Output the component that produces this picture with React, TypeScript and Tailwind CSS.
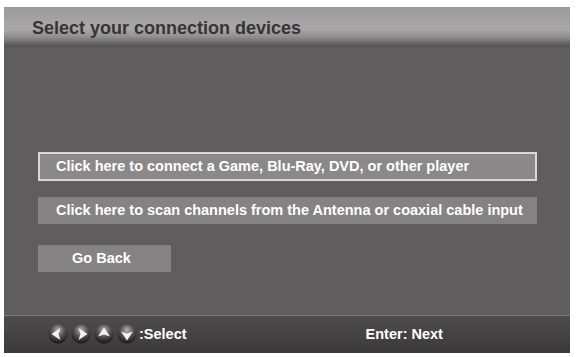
const ArrowBall = ({ dir }: { dir: "left" | "right" | "up" | "down" }) => {
  const paths: Record<string, string> = {
    left: "M3.5 10 L12.5 4 L10.5 10 L12.5 16 Z",
    right: "M16.5 10 L7.5 4 L9.5 10 L7.5 16 Z",
    up: "M10 3.5 L16 12.5 L10 10.5 L4 12.5 Z",
    down: "M10 16.5 L16 7.5 L10 9.5 L4 7.5 Z",
  };
  return (
    <svg width="20" height="20" viewBox="0 0 20 20" className="shrink-0">
      <defs>
        <radialGradient id={`ball-${dir}`} cx="50%" cy="30%" r="70%">
          <stop offset="0%" stopColor="#b5b3b4" />
          <stop offset="45%" stopColor="#5a5859" />
          <stop offset="100%" stopColor="#161515" />
        </radialGradient>
      </defs>
      <circle cx="10" cy="10" r="9.5" fill={`url(#ball-${dir})`} />
      <path d={paths[dir]} fill="#f2f2f2" />
    </svg>
  );
};

const App = () => {
  const font = { fontFamily: '"Liberation Sans", Arial, sans-serif' };
  return (
    <div className="w-[576px] h-[357px] bg-white pt-[7px] pl-[4px]" style={font}>
      <div className="w-[566px] h-[346px] flex flex-col bg-[#605d5e]">
        {/* title bar */}
        <div className="h-[40px] flex items-center px-[28px] bg-[linear-gradient(to_bottom,#9c9a9b_0%,#a9a7a8_55%,#8f8d8e_75%,#626061_92%,#525051_100%)]">
          <span className="text-[18px] font-bold text-[#363435] mt-[2px]">
            Select your connection devices
          </span>
        </div>

        {/* menu */}
        <div className="flex-1 flex flex-col items-start pl-[34px] pt-[105px]">
          <button className="w-[499px] h-[29px] flex items-center pl-[16px] bg-[#8b8889] border-2 border-[#d9d7d8] text-white text-[14.5px] font-bold">
            Click here to connect a Game, Blu-Ray, DVD, or other player
          </button>
          <button className="mt-[16px] w-[499px] h-[27px] flex items-center pl-[18px] bg-[#858283] text-white text-[14.5px] font-bold">
            Click here to scan channels from the Antenna or coaxial cable input
          </button>
          <button className="mt-[21px] w-[133px] h-[27px] flex items-center pl-[34px] bg-[#858283] text-white text-[14.5px] font-bold">
            Go Back
          </button>
        </div>

        {/* bottom bar */}
        <div className="h-[38px] flex items-center border-t border-[#7d7b7c] bg-[linear-gradient(to_bottom,#4e4c4d_0%,#444243_50%,#3b393a_100%)]">
          <div className="flex items-center gap-[3px] ml-[44px] mt-[-1px]">
            <ArrowBall dir="left" />
            <ArrowBall dir="right" />
            <ArrowBall dir="up" />
            <ArrowBall dir="down" />
          </div>
          <span className="ml-[2px] text-white text-[14.5px] font-bold">:Select</span>
          <span className="ml-[179px] text-white text-[14.5px] font-bold">Enter: Next</span>
        </div>
      </div>
    </div>
  );
};

export default App;
